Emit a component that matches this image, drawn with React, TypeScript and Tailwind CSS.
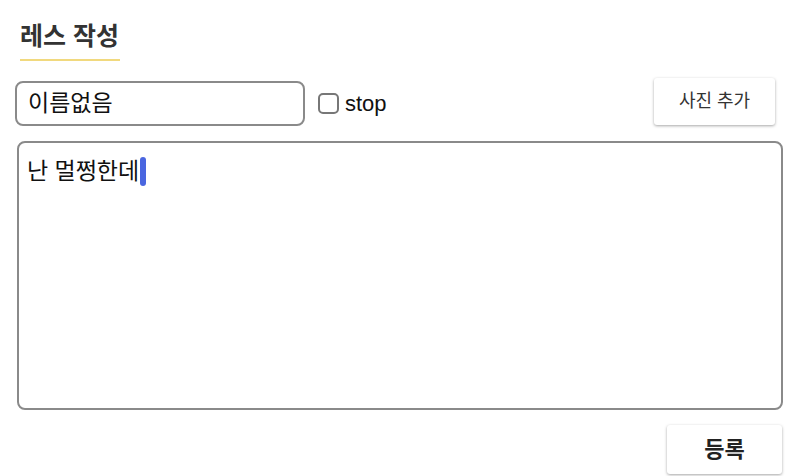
export default function App() {
    const font = { fontFamily: '"Liberation Sans", "Noto Sans CJK KR", sans-serif' };

    return (
        <div className="w-[800px] h-[476px] bg-white text-[#111] overflow-hidden" style={font}>
            <div className="pt-[20px] pl-[20px]">
                <h2 className="inline-block pb-[7px] pr-[1px] border-b-2 border-[#f1d97e] text-[25px] leading-[32px] font-bold text-[#333]">레스 작성</h2>
            </div>

            <div className="flex items-center mt-[18px] pl-[15px] pr-[25px] h-[48px]">
                <div className="flex items-center w-[290px] h-[45px] px-[11px] border-2 border-[#8a8a8a] rounded-[8px] text-[23px]">이름없음</div>
                <label className="flex items-center ml-[13px] gap-[6px] text-[22px]">
                    <span className="block w-[21px] h-[21px] border-2 border-[#777] rounded-[5px]"></span>
                    stop
                </label>
                <div className="flex-1"></div>
                <button className="w-[121px] h-[47px] -mt-[4px] bg-white rounded-[3px] shadow-[0_1px_3px_rgba(0,0,0,0.35)] text-[18px] text-[#333]">사진 추가</button>
            </div>

            <div className="mt-[14px] ml-[17px] w-[766px] h-[269px] border-2 border-[#8a8a8a] rounded-[8px] px-[8px] pt-[13px]">
                <div className="flex items-center text-[23px] leading-[30px]">
                    난 멀쩡한데
                    <span className="inline-block ml-[1px] w-[6px] h-[29px] rounded-[3px] bg-[#4a66e0]"></span>
                </div>
            </div>

            <div className="flex justify-end mt-[15px] pr-[18px]">
                <button className="w-[115px] h-[49px] bg-white rounded-[3px] shadow-[0_1px_3px_rgba(0,0,0,0.35)] text-[22px] font-bold text-[#222]">등록</button>
            </div>
        </div>
    );
}
